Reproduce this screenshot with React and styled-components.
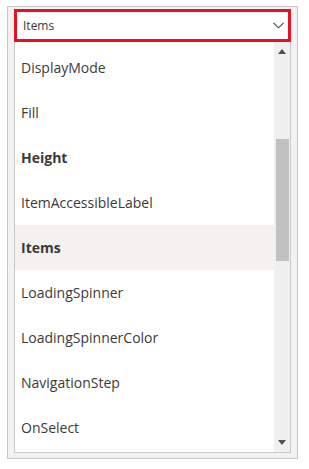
import React from "react";
import styled, { createGlobalStyle } from "styled-components";

const GlobalStyle = createGlobalStyle`
  html, body {
    margin: 0;
    padding: 0;
    background: #ffffff;
  }
  body {
    font-family: "Open Sans", "Noto Sans", sans-serif;
  }
`;

const properties = [
  { name: "DisplayMode" },
  { name: "Fill" },
  { name: "Height", bold: true },
  { name: "ItemAccessibleLabel" },
  { name: "Items", bold: true, selected: true },
  { name: "LoadingSpinner" },
  { name: "LoadingSpinnerColor" },
  { name: "NavigationStep" },
  { name: "OnSelect" },
];

const Chevron = () => (
  <svg width="11" height="7" viewBox="0 0 11 7">
    <path d="M0.5 0.8 L5.5 5.8 L10.5 0.8" fill="none" stroke="#444" strokeWidth="1.1" />
  </svg>
);

const Arrow = ({ down }) => (
  <svg width="8" height="5" viewBox="0 0 8 5">
    <path d={down ? "M0 0 H8 L4 5 Z" : "M0 5 H8 L4 0 Z"} fill="#505050" />
  </svg>
);

const App = () => {
  return (
    <>
      <GlobalStyle />
      <Panel>
        <Dropdown>
          <Selector>
            <SelectedText>Items</SelectedText>
            <Chevron />
          </Selector>
          <ListBox>
            <Options>
              {properties.map((p) => (
                <Option key={p.name} $bold={p.bold} $selected={p.selected}>
                  {p.name}
                </Option>
              ))}
            </Options>
            <ScrollBar>
              <ScrollButton>
                <Arrow />
              </ScrollButton>
              <Track>
                <Thumb />
              </Track>
              <ScrollButton>
                <Arrow down />
              </ScrollButton>
            </ScrollBar>
          </ListBox>
        </Dropdown>
      </Panel>
    </>
  );
};

const Panel = styled.div`
  margin: 6px 0 0 7px;
  width: 291px;
  height: 453px;
  box-sizing: border-box;
  border: 1px solid #c8c8c8;
  background: #f3f2f1;
  padding: 2px 0 0 6px;
`;

const Dropdown = styled.div`
  width: 277px;
  display: flex;
  flex-direction: column;
`;

const Selector = styled.div`
  height: 33px;
  box-sizing: border-box;
  border: 3px solid #e81123;
  background: #ffffff;
  display: flex;
  align-items: center;
  justify-content: space-between;
  padding: 0 4px 0 6px;
`;

const SelectedText = styled.span`
  font-size: 12px;
  color: #3b3a39;
`;

const ListBox = styled.div`
  height: 411px;
  box-sizing: border-box;
  border: 1px solid #c8c8c8;
  border-top: none;
  background: #ffffff;
  display: flex;
`;

const Options = styled.ul`
  list-style: none;
  margin: 0;
  padding: 3px 0 0;
  flex: 1;
`;

const Option = styled.li`
  height: 45px;
  display: flex;
  align-items: center;
  padding-left: 6px;
  font-size: 14px;
  color: #3b3a39;
  font-weight: ${(p) => (p.$bold ? 700 : 400)};
  background: ${(p) => (p.$selected ? "#f3f2f1" : "transparent")};
`;

const ScrollBar = styled.div`
  width: 16px;
  background: #f0f0f0;
  display: flex;
  flex-direction: column;
`;

const ScrollButton = styled.div`
  height: 19px;
  display: flex;
  align-items: center;
  justify-content: center;
`;

const Track = styled.div`
  flex: 1;
  padding: 78px 1px 0 2px;
`;

const Thumb = styled.div`
  height: 122px;
  background: #c1c1c1;
`;

export default App;
